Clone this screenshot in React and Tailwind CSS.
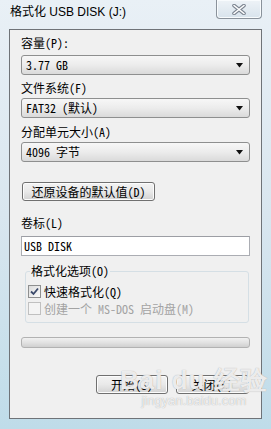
import { useState } from "react";

const mono = "font-['Noto_Sans_Mono_CJK_SC','Liberation_Mono','Noto_Sans_CJK_SC',monospace]";

function Combo({ value }) {
  return (
    <div className="flex h-[20px] items-center justify-between rounded-[3px] border border-[#8e8f8f] bg-gradient-to-b from-[#f7f7f7] via-[#ececec] to-[#dadada] pl-[4px] pr-[5px]">
      <span className="text-[12px] leading-[14px] text-black">{value}</span>
      <svg width="8" height="5" viewBox="0 0 8 5">
        <path d="M0 0 H7 L3.5 4.5 Z" fill="#111" />
      </svg>
    </div>
  );
}

function Button({ children, className = "" }) {
  return (
    <div
      className={`flex h-[19px] items-center justify-center rounded-[3px] border border-[#707070] bg-gradient-to-b from-[#f3f3f3] via-[#e9e9e9] to-[#d2d2d2] text-[12px] leading-[14px] text-black shadow-[inset_0_0_0_1px_#fcfcfc] ${className}`}
    >
      {children}
    </div>
  );
}

function Check({ checked, disabled, label }) {
  return (
    <div className="flex h-[17px] items-center gap-[3px]">
      <div
        className={`flex h-[13px] w-[13px] items-center justify-center border ${
          disabled ? "border-[#c0c0c0] bg-[#f4f4f4]" : "border-[#8e8f8f] bg-gradient-to-br from-[#dcdcdc] to-[#fbfbfb]"
        }`}
      >
        {checked && (
          <svg width="9" height="9" viewBox="0 0 9 9">
            <path d="M1 4.5 L3.5 7 L8 1.5" stroke="#3b4a6b" strokeWidth="1.8" fill="none" />
          </svg>
        )}
      </div>
      <span className={`text-[12px] leading-[14px] ${disabled ? "text-[#a3a3a3]" : "text-black"}`}>{label}</span>
    </div>
  );
}

export default function App() {
  const [label] = useState("USB DISK");

  return (
    <div className="relative flex h-[429px] w-[271px] flex-col overflow-hidden bg-gradient-to-b from-[#e9f0f6] via-[#d9e6ef] to-[#bfdce9]">
      {/* title bar */}
      <div className="flex h-[29px] items-start justify-between">
        <span className="ml-[10px] mt-[4px] font-['Liberation_Sans','Noto_Sans_CJK_SC',sans-serif] text-[12px] leading-[16px] text-black">
          格式化 USB DISK (J:)
        </span>
        <div className="mr-[9px] flex h-[19px] w-[46px] items-center justify-center rounded-b-[4px] border border-t-0 border-[#8a929b] bg-gradient-to-b from-[#eef3f7] to-[#d8e3ec] shadow-[inset_0_0_0_1px_#f8fbfd]">
          <svg width="14" height="11" viewBox="0 0 14 11">
            <path d="M2 1.5 L12 9.5 M12 1.5 L2 9.5" stroke="#7c8591" strokeWidth="3.6" strokeLinecap="round" />
            <path d="M2 1.5 L12 9.5 M12 1.5 L2 9.5" stroke="#ffffff" strokeWidth="1.6" strokeLinecap="round" />
          </svg>
        </div>
      </div>

      {/* client area */}
      <div className={`mx-[9px] flex h-[390px] flex-col border border-[#6f7378] bg-[#f0f0f0] px-[11px] ${mono}`}>
        <span className="mt-[6px] text-[12px] leading-[14px] text-black">容量(P):</span>
        <div className="mt-[5px]">
          <Combo value="3.77 GB" />
        </div>

        <span className="mt-[6px] text-[12px] leading-[14px] text-black">文件系统(F)</span>
        <div className="mt-[3px]">
          <Combo value="FAT32 (默认)" />
        </div>

        <span className="mt-[7px] text-[12px] leading-[14px] text-black">分配单元大小(A)</span>
        <div className="mt-[3px]">
          <Combo value="4096 字节" />
        </div>

        <Button className="ml-[1px] mt-[20px] w-[133px]">还原设备的默认值(D)</Button>

        <span className="mt-[15px] text-[12px] leading-[14px] text-black">卷标(L)</span>
        <div className="mt-[6px] flex h-[20px] items-center border border-[#abadb3] border-t-[#9c9ea4] bg-white pl-[2px] text-[12px] leading-[14px] text-black">
          {label}
        </div>

        <fieldset className="ml-[4px] mr-[1px] mt-[8px] rounded-[3px] border border-[#d5dfe5] pb-[5px] pl-[2px]">
          <legend className="ml-[2px] px-[1px] text-[12px] leading-[14px] text-black">格式化选项(O)</legend>
          <div className="mt-[5px] flex flex-col">
            <Check checked label="快速格式化(Q)" />
            <Check disabled label="创建一个 MS-DOS 启动盘(M)" />
          </div>
        </fieldset>

        <div className="mt-[14px] h-[11px] rounded-[3px] border border-[#b2b2b2] bg-gradient-to-b from-[#f1f1f1] via-[#e2e2e2] to-[#d0d0d0]" />

        <div className="mr-[1px] mt-[27px] flex justify-end gap-[8px]">
          <Button className="w-[72px]">开始(S)</Button>
          <Button className="w-[73px]">关闭(C)</Button>
        </div>
      </div>

      {/* watermark */}
      <div className="pointer-events-none absolute left-[120px] top-[366px] flex flex-col items-center font-['Liberation_Sans',sans-serif] text-white/80 [text-shadow:0_0_1px_#9a9a9a]">
        <span className="text-[26px] font-bold leading-[28px] tracking-[1px]">Bai du 经验</span>
        <span className="text-[13px] leading-[14px]">jingyan.baidu.com</span>
      </div>
    </div>
  );
}
